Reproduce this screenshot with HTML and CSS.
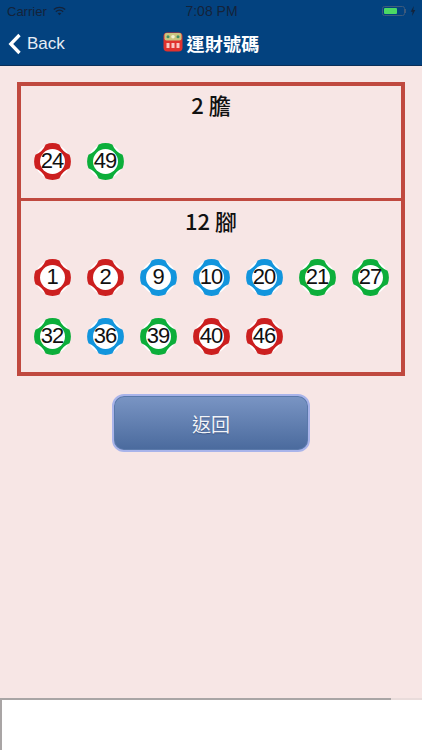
FILE: index.html
```html
<!DOCTYPE html>
<html lang="zh-Hant">
<head>
<meta charset="utf-8">
<title>運財號碼</title>
<link rel="stylesheet" href="styles.css">
</head>
<body>
<svg class="defs" width="0" height="0" aria-hidden="true">
  <symbol id="chip" viewBox="0 0 40 40">
    <circle cx="20" cy="20" r="17.800" fill="#fff"/>
    <path d="M27 2.500Q30 10 37.500 13A19 19 0 0 1 37.500 27Q30 30 27 37.500A19 19 0 0 1 13 37.500Q10 30 2.500 27A19 19 0 0 1 2.500 13Q10 10 13 2.500A19 19 0 0 1 27 2.500Z" fill="currentColor"/>
    <circle cx="20" cy="20" r="12.800" fill="#fff"/>
  </symbol>
</svg>
<div class="phone">
  <header class="top">
    <div class="status">
      <div class="status-left">
        <span>Carrier</span>
        <svg class="wifi" viewBox="0 0 16 12"><path d="M1 4.200C5 .6 11 .6 15 4.200" fill="none" stroke="#14233a" stroke-width="1.700"/><path d="M3.500 6.800C6 4.600 10 4.600 12.500 6.800" fill="none" stroke="#14233a" stroke-width="1.700"/><path d="M5.800 9C7 8 9 8 10.200 9L8 11.300Z" fill="#14233a"/></svg>
      </div>
      <span class="clock">7:08 PM</span>
      <div class="status-right">
        <span class="battery"><span class="level"></span></span>
        <span class="nub"></span>
        <svg class="bolt" viewBox="0 0 6 11"><path d="M3.800 0L.5 6.200H2.600L2 11L5.500 4.500H3.300Z" fill="#14233a"/></svg>
      </div>
    </div>
    <nav class="nav">
      <a class="back">
        <svg class="chevron" viewBox="0 0 14 22"><path d="M11.500 2L2.800 11L11.500 20" fill="none" stroke="#fff" stroke-width="3.300"/></svg>
        <span>Back</span>
      </a>
      <div class="title">
        <svg class="abacus" viewBox="0 0 20 20">
          <rect x="0.500" y="0.500" width="19" height="19" rx="4" fill="#e0322e"/>
          <rect x="1.500" y="1" width="17" height="7.500" rx="2" fill="#c9c47f"/>
          <circle cx="5" cy="4.700" r="1.500" fill="#3f8f66"/><circle cx="10" cy="4.700" r="1.800" fill="#f3f0d0"/><circle cx="15" cy="4.700" r="1.500" fill="#3f8f66"/>
          <rect x="3.500" y="11" width="3" height="5" fill="#f9c8c3"/><rect x="8.500" y="11" width="3" height="5" fill="#f9c8c3"/><rect x="13.500" y="11" width="3" height="5" fill="#f9c8c3"/>
        </svg>
        <span>運財號碼</span>
      </div>
    </nav>
  </header>

  <main class="main">
    <section class="panel">
      <div class="group first">
        <h2>2 膽</h2>
        <div class="chips">
          <div class="ball red"><svg><use href="#chip"/></svg><span>24</span></div>
          <div class="ball green"><svg><use href="#chip"/></svg><span>49</span></div>
        </div>
      </div>
      <div class="group second">
        <h2>12 腳</h2>
        <div class="chips">
          <div class="ball red"><svg><use href="#chip"/></svg><span>1</span></div>
          <div class="ball red"><svg><use href="#chip"/></svg><span>2</span></div>
          <div class="ball blue"><svg><use href="#chip"/></svg><span>9</span></div>
          <div class="ball blue"><svg><use href="#chip"/></svg><span>10</span></div>
          <div class="ball blue"><svg><use href="#chip"/></svg><span>20</span></div>
          <div class="ball green"><svg><use href="#chip"/></svg><span>21</span></div>
          <div class="ball green"><svg><use href="#chip"/></svg><span>27</span></div>
          <div class="ball green"><svg><use href="#chip"/></svg><span>32</span></div>
          <div class="ball blue"><svg><use href="#chip"/></svg><span>36</span></div>
          <div class="ball green"><svg><use href="#chip"/></svg><span>39</span></div>
          <div class="ball red"><svg><use href="#chip"/></svg><span>40</span></div>
          <div class="ball red"><svg><use href="#chip"/></svg><span>46</span></div>
        </div>
      </div>
    </section>
    <button class="return">返回</button>
  </main>

  <footer class="ad"></footer>
</div>
</body>
</html>
```
FILE: styles.css
```css
* { box-sizing: border-box; }
html, body { margin: 0; padding: 0; }
body { font-family: "Liberation Sans", "Noto Sans CJK TC", sans-serif; background: #f7e6e5; }
.defs { position: absolute; }
.phone { width: 422px; height: 750px; display: flex; flex-direction: column; overflow: hidden; }

.top { height: 66px; background: #03427f; border-bottom: 1px solid #0a2f58; flex: none; }
.status { height: 22px; padding: 0 6px 0 7px; display: grid; grid-template-columns: 1fr auto 1fr; align-items: center; font-size: 13px; color: #14233a; }
.status-left { display: flex; align-items: center; gap: 6px; }
.wifi { width: 13px; height: 10px; }
.clock { font-size: 14px; }
.status-right { display: flex; align-items: center; justify-content: flex-end; }
.battery { width: 23px; height: 10px; border: 1px solid #3d5a7c; border-radius: 2.500px; padding: 1px; display: flex; }
.level { width: 13px; background: #4cd964; border-radius: 1px; }
.nub { width: 1.500px; height: 4px; background: #3d5a7c; margin-right: 4px; }
.bolt { width: 6px; height: 10px; }

.nav { height: 43px; position: relative; display: flex; align-items: center; justify-content: center; }
.back { position: absolute; left: 8px; top: 0; height: 100%; display: flex; align-items: center; gap: 5px; color: #e6edf5; font-size: 17px; }
.chevron { width: 14px; height: 22px; }
.title { display: flex; align-items: center; gap: 4px; color: #fff; font-size: 18px; font-weight: 700; }
.title span { letter-spacing: .2px; padding-bottom: 2px; }
.abacus { width: 20px; height: 20px; margin-top: -4px; }

.main { flex: 1; display: flex; flex-direction: column; align-items: center; padding-top: 16px; }
.panel { width: 388px; height: 294px; border: 4px solid #c0493f; display: flex; flex-direction: column; }
.group { padding: 0 11.500px; }
.first { height: 115px; border-bottom: 3px solid #c0493f; }
.second { flex: 1; }
h2 { margin: 0; text-align: center; font-family: "Noto Sans CJK TC", sans-serif; font-size: 22px; font-weight: 500; line-height: 30px; color: #111; }
.first h2 { padding-top: 3px; height: 36px; margin-bottom: 20px; }
.second h2 { padding-top: 4px; height: 36px; margin-bottom: 21px; }
.chips { display: grid; grid-template-columns: repeat(7, 39px); gap: 20px 14px; }
.ball { position: relative; width: 39px; height: 39px; display: grid; place-items: center; font-size: 22px; }
.ball svg { position: absolute; inset: 0; width: 100%; height: 100%; }
.ball span { position: relative; letter-spacing: -1px; color: #111; padding-bottom: 2px; }
.red { color: #cc1f1f; }
.green { color: #0cae3a; }
.blue { color: #1295dd; }

.return { margin-top: 18px; width: 198px; height: 58px; border: 2px solid #a9b4ea; border-radius: 12px; background: linear-gradient(#7a95c4, #4a6a9d); box-shadow: inset 0 0 0 1px #5a79aa; color: #f2f4f8; font-family: "Noto Sans CJK TC", sans-serif; font-size: 19px; text-shadow: 0 1px 1px #3c5584; }

.ad { flex: none; height: 52px; background: #fff; border-top: 2px solid transparent; border-image: linear-gradient(to right, #a9a5a5 390px, #e9dcdb 390px) 1; border-left: 2px solid #cfcfcf; }
```
